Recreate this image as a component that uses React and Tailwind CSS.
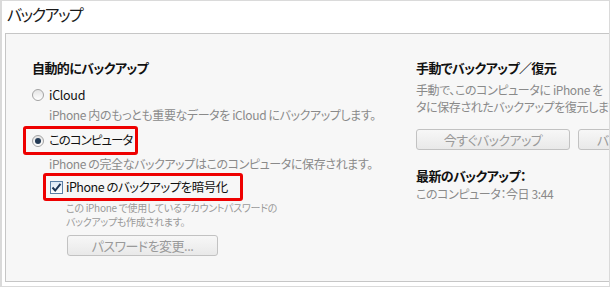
import React from "react";

const jp = "font-['Noto_Sans_CJK_JP','Noto_Sans',sans-serif] [font-feature-settings:'palt']";

function Radio({ checked }) {
  return (
    <span className="w-[12px] h-[12px] rounded-full border border-[#a3a3a3] bg-linear-to-b from-[#e4e4e4] to-white flex items-center justify-center shrink-0">
      {checked && <span className="w-[6px] h-[6px] rounded-full bg-[#243b55]" />}
    </span>
  );
}

function Checkbox() {
  return (
    <span className="w-[13px] h-[13px] border border-[#5a7fa6] bg-linear-to-b from-[#dce8f5] to-white flex items-center justify-center shrink-0">
      <svg width="11" height="11" viewBox="0 0 11 11">
        <path d="M1.5 5.5 L4.2 8.5 L9.5 1.8" fill="none" stroke="#1d3656" strokeWidth="2" />
      </svg>
    </span>
  );
}

function Button({ children, className }) {
  return (
    <div
      className={
        "h-[21px] border border-[#c2c2c2] rounded-[3px] bg-linear-to-b from-[#f7f7f7] to-[#e9e9e9] flex items-center text-[13px] tracking-[-0.5px] text-[#9a9a9a] " +
        className
      }
    >
      {children}
    </div>
  );
}

export default function App() {
  return (
    <div className={"w-[610px] h-[287px] bg-white border-t border-l-2 border-r border-b border-[#dadada] flex flex-col overflow-hidden whitespace-nowrap " + jp}>
      {/* title */}
      <div className="h-[32px] pl-[5px] pt-[1px] text-[16px] tracking-[-1.5px] leading-[24px] text-[#1a1a1a]">バックアップ</div>

      {/* panel */}
      <div className="ml-[3px] h-[249px] border-t border-l border-b border-[#c6c6c6] bg-[#f7f7f7] flex overflow-hidden">
        {/* left column */}
        <div className="w-[410px] shrink-0 pl-[26px] pt-[25px]">
          <div className="text-[13px] tracking-[-0.6px] leading-[18px] font-bold text-[#111]">自動的にバックアップ</div>

          <div className="mt-[9px] flex items-center gap-[5px] h-[18px]">
            <Radio />
            <span className="text-[12.5px] tracking-[-0.3px] text-[#111]">iCloud</span>
          </div>
          <div className="pl-[17px] text-[12px] tracking-[-0.4px] leading-[18px] text-[#8a8a8a] mt-[2px]">
            iPhone 内のもっとも重要なデータを iCloud にバックアップします。
          </div>

          <div className="-ml-[9px] mt-[2px] flex items-center gap-[5px] h-[29px] w-[115px] pl-[6px] border-[3px] border-[#ee0000] rounded-[3px]">
            <Radio checked />
            <span className="text-[12.5px] tracking-[-1px] text-[#111]">このコンピュータ</span>
          </div>
          <div className="pl-[17px] text-[12px] tracking-[-0.4px] leading-[18px] text-[#8a8a8a]">
            iPhone の完全なバックアップはこのコンピュータに保存されます。
          </div>

          <div className="ml-[11px] flex items-center gap-[3px] h-[28px] w-[200px] pl-[4px] border-[3px] border-[#ee0000] rounded-[3px]">
            <Checkbox />
            <span className="text-[12.5px] tracking-[-0.5px] text-[#111]">iPhone のバックアップを暗号化</span>
          </div>
          <div className="pl-[34px] text-[10px] tracking-[-0.3px] leading-[14px] text-[#9a9a9a]">
            <div>この iPhone で使用しているアカウントパスワードの</div>
            <div>バックアップも作成されます。</div>
          </div>
          <Button className="ml-[35px] mt-[6px] w-[151px] justify-center">パスワードを変更...</Button>
        </div>

        {/* right column */}
        <div className="flex-1 min-w-0 pt-[25px]">
          <div className="text-[13px] tracking-[-0.6px] leading-[18px] font-bold text-[#111]">手動でバックアップ／復元</div>
          <div className="mt-[5px] text-[12px] tracking-[-0.4px] leading-[16.5px] text-[#8a8a8a]">
            <div>手動で、このコンピュータに iPhone を</div>
            <div>タに保存されたバックアップを復元します。</div>
          </div>
          <div className="mt-[14px] flex gap-[8px]">
            <Button className="w-[154px] shrink-0 justify-center">今すぐバックアップ</Button>
            <Button className="w-[154px] shrink-0 pl-[18px]">バックアップを復元</Button>
          </div>
          <div className="mt-[17px] text-[13px] tracking-[-0.6px] leading-[18px] font-bold text-[#111]">最新のバックアップ：</div>
          <div className="text-[12px] tracking-[-0.4px] leading-[18px] text-[#8a8a8a]">このコンピュータ：今日 3:44</div>
        </div>
      </div>
    </div>
  );
}
